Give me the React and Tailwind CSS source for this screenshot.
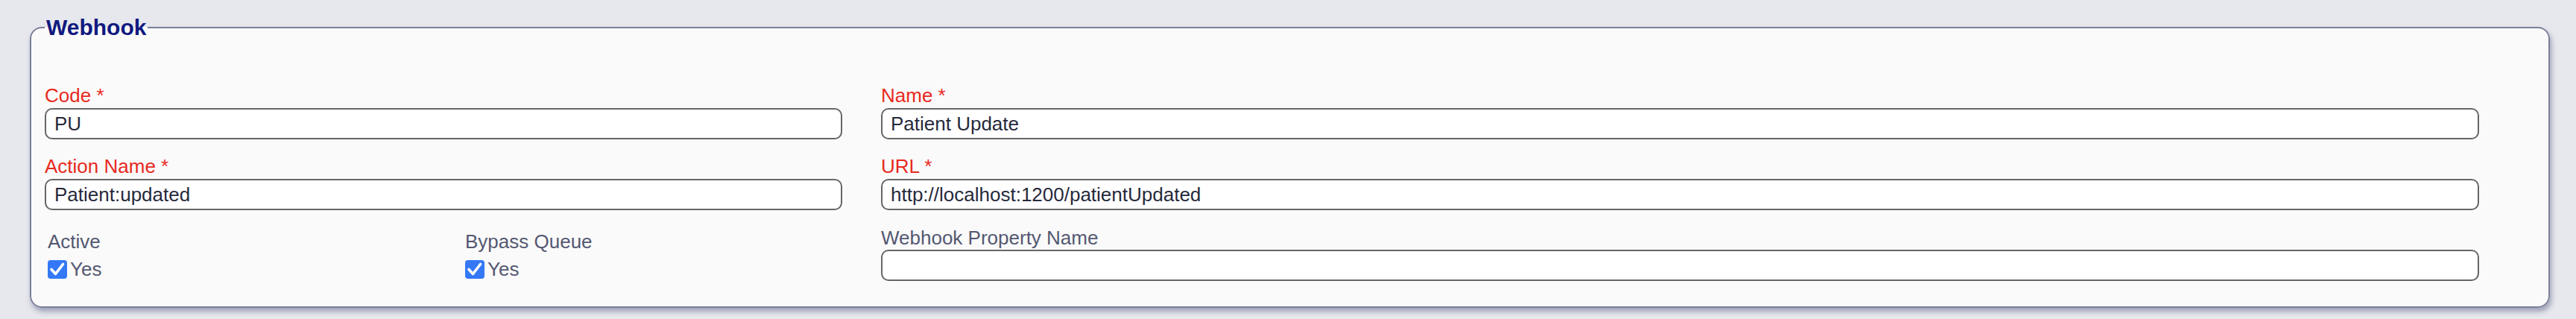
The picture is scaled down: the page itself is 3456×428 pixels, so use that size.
import React from "react";

const font = { fontFamily: '"Liberation Sans", Arial, sans-serif' };

function RequiredLabel({ children }) {
  return <label className="block h-[29px] text-[26px] leading-[29px] text-[#e8291d]">{children} *</label>;
}

function TextInput({ value = "" }) {
  return (
    <input
      readOnly
      value={value}
      className="mt-[2px] block h-[42px] w-full rounded-[10px] border-2 border-[#666666] bg-white px-[11px] text-[26px] text-[#262a3c] outline-none"
    />
  );
}

function Field({ label, value, required = true, className = "" }) {
  return (
    <div className={className}>
      {required ? (
        <RequiredLabel>{label}</RequiredLabel>
      ) : (
        <label className="block h-[29px] pt-[1px] text-[26px] leading-[29px] text-[#545871]">{label}</label>
      )}
      <TextInput value={value} />
    </div>
  );
}

function CheckField({ label }) {
  return (
    <div className="pl-[4px] pt-[6px]">
      <div className="h-[29px] text-[26px] leading-[29px] text-[#545871]">{label}</div>
      <div className="mt-[8px] flex items-center gap-[4px]">
        <span className="flex h-[25px] w-[26px] items-center justify-center rounded-[4px] bg-[#3478f6]">
          <svg width="26" height="25" viewBox="0 0 26 25" fill="none">
            <path d="M5 12.5 L10.5 18.5 L20.5 5.5" stroke="white" strokeWidth="3.6" strokeLinecap="round" strokeLinejoin="round" />
          </svg>
        </span>
        <span className="text-[26px] leading-[29px] text-[#545871]">Yes</span>
      </div>
    </div>
  );
}

export default function App() {
  return (
    <div className="h-[428px] bg-[#e7e8ed] pt-[20px]" style={font}>
      <fieldset className="ml-[40px] w-[3381px] rounded-[16px] border-2 border-[#7b809b] bg-[#fafafa] pl-[18px] pt-[60px] pb-[34px] shadow-[2px_5px_7px_rgba(70,78,120,0.45)]">
        <legend className="px-[2px] text-[30px] font-bold leading-[34px] text-[#10197f]">Webhook</legend>
        <div className="flex gap-[52px]">
          <div className="flex w-[1070px] flex-col gap-[22px]">
            <Field label="Code" value="PU" />
            <Field label="Action Name" value="Patient:updated" />
            <div className="grid grid-cols-2 gap-x-[50px]">
              <CheckField label="Active" />
              <CheckField label="Bypass Queue" />
            </div>
          </div>
          <div className="flex w-[2144px] flex-col gap-[22px]">
            <Field label="Name" value="Patient Update" />
            <Field label="URL" value="http://localhost:1200/patientUpdated" />
            <Field label="Webhook Property Name" required={false} />
          </div>
        </div>
      </fieldset>
    </div>
  );
}
